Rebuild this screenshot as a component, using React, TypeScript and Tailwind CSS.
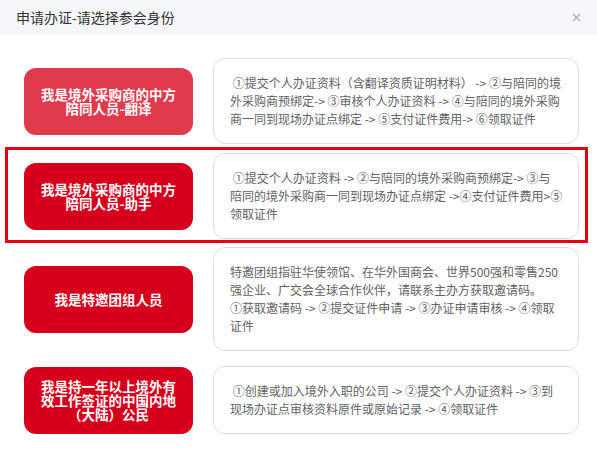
import type { ReactNode } from 'react';

interface Identity {
  title: ReactNode;
  steps: ReactNode;
  tone: 'soft' | 'solid';
  gap: string;
  focused?: boolean;
}

const IDENTITIES: Identity[] = [
  {
    title: '我是境外采购商的中方陪同人员-翻译',
    steps: '\u00a0①提交个人办证资料（含翻译资质证明材料） -> ②与陪同的境外采购商预绑定-> ③审核个人办证资料 -> ④与陪同的境外采购商一同到现场办证点绑定 -> ⑤支付证件费用-> ⑥领取证件',
    tone: 'soft',
    gap: 'mt-0',
  },
  {
    title: '我是境外采购商的中方陪同人员-助手',
    steps: (
      <>
        {'\u00a0①提交个人办证资料 -> ②与陪同的境外采购商预绑定-> ③与'}
        <br />
        {'陪同的境外采购商一同到现场办证点绑定 ->④支付证件费用>⑤领取证件'}
      </>
    ),
    tone: 'solid',
    gap: 'mt-[9px]',
    focused: true,
  },
  {
    title: '我是特邀团组人员',
    steps: (
      <>
        特邀团组指驻华使领馆、在华外国商会、世界500强和零售250强企业、广交会全球合作伙伴，请联系主办方获取邀请码。
        <br />
        ①获取邀请码 -&gt; ②提交证件申请 -&gt; ③办证申请审核 -&gt; ④领取证件
      </>
    ),
    tone: 'solid',
    gap: 'mt-[8px]',
  },
  {
    title: '我是持一年以上境外有效工作签证的中国内地（大陆）公民',
    steps: (
      <>
        {'\u00a0①创建或加入境外入职的公司 -> ②提交个人办证资料 -> ③到'}
        <br />
        {'现场办证点审核资料原件或原始记录 -> ④领取证件'}
      </>
    ),
    tone: 'solid',
    gap: 'mt-[15px]',
  },
];

function IdentityRow({ item }: { item: Identity }) {
  return (
    <div className={`relative flex items-center ${item.gap}`}>
      <button
        className={`flex h-[67px] w-[169px] shrink-0 items-center justify-center rounded-[12px] px-[14px] text-center text-[13.5px] font-bold leading-[14px] text-white ${
          item.tone === 'soft' ? 'bg-[#e03a4d]' : 'bg-[#d7001c]'
        }`}
      >
        {item.title}
      </button>
      <div className="ml-[20px] flex min-h-[68px] w-[366px] items-center rounded-[12px] border border-[#dcdfe6] py-[15px] pl-4 pr-[12px] text-[12px] leading-[18px] text-[#606266]">
        <p>{item.steps}</p>
      </div>
      {item.focused && (
        <div className="pointer-events-none absolute left-[-19px] top-[-6px] h-[96px] w-[583px] border-[3px] border-[#e50013]" />
      )}
    </div>
  );
}

export default function App() {
  return (
    <div className="h-[469px] w-[597px] overflow-hidden bg-white font-['Noto_Sans_CJK_SC','Noto_Sans',sans-serif]">
      <div className="flex h-[35px] items-center justify-between bg-[#f4f6f9] pl-4 pr-[16px]">
        <span className="text-[14px] text-[#333]">申请办证-请选择参会身份</span>
        <svg width="9" height="9" viewBox="0 0 9 9" className="text-[#a8abb2]">
          <path d="M1 1L8 8M8 1L1 8" stroke="currentColor" strokeWidth="1.1" />
        </svg>
      </div>
      <div className="flex flex-col pl-[24px] pt-[23px]">
        {IDENTITIES.map((item, i) => (
          <IdentityRow key={i} item={item} />
        ))}
      </div>
    </div>
  );
}
